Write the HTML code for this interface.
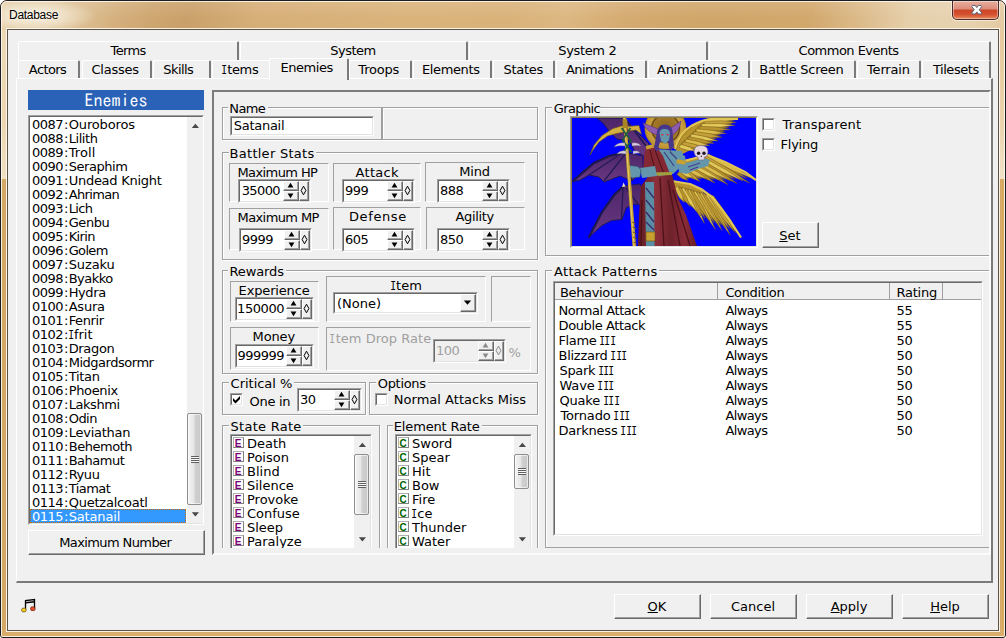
<!DOCTYPE html><html><head><meta charset="utf-8"><title>Database</title><style>
html,body{margin:0;padding:0;background:#fff;}
body{width:1006px;height:638px;position:relative;overflow:hidden;font-family:"DejaVu Sans","Liberation Sans",sans-serif;font-size:13px;color:#000;}
body div, body svg{position:absolute;}
.t{white-space:nowrap;line-height:16px;height:16px;font-size:13px;}
u{text-decoration:underline;text-underline-offset:1px;}
#win{left:0;top:0;width:1006px;height:638px;box-sizing:border-box;border:1px solid #1c1c24;border-radius:7px 7px 3px 3px;overflow:hidden;background:#d5a865;}
#tbar{left:-10px;top:0;width:1024px;height:30px;background:radial-gradient(ellipse 62px 17px at 44px 15px,rgba(255,250,238,.75),rgba(255,250,238,.45) 55%,rgba(255,250,238,0) 100%),linear-gradient(180deg,rgba(255,255,255,.12),rgba(255,255,255,0) 60%),linear-gradient(100deg,#e2cba4 10px,#e0c8a0 60px,#dbbd90 95px,#d5b07e 125px,#cea670 160px,#c9a069 195px,#cfa770 230px,#d6ae78 265px,#dab37b 410px,#d9b279 510px,#dcb781 570px,#d4aa70 630px,#d0a569 710px,#d2a86d 810px,#dcbb8a 860px,#e6d0ac 910px,#e7d2b0 960px,#e3c89e 1014px);}
#fl1{left:0;top:29px;width:7px;height:149px;background:linear-gradient(180deg,#ecd9b6,#ebd6b0 60%,#efe0c4);}
#fr1{right:0;top:29px;width:7px;height:149px;background:linear-gradient(180deg,#e6c99e,#ead3ac 60%,#f0e2c8);}
#fl2{left:0;top:178px;width:7px;height:460px;background:#d5a865;}
#fr2{right:0;top:178px;width:7px;height:460px;background:#d8aa64;}
#fb{left:0;bottom:0;width:1004px;height:7px;background:#d9ad6b;}
#hl{left:0;top:0;right:0;bottom:0;border:1px solid rgba(255,250,235,.85);border-radius:6px 6px 2px 2px;}
#title{left:9px;top:7px;font-family:"Liberation Sans",sans-serif;font-size:12px;line-height:16px;letter-spacing:-0.28px;color:#000;white-space:nowrap;text-shadow:0 0 4px rgba(255,255,255,.8),0 0 8px rgba(255,255,255,.6);}
#closewrap{left:950px;top:1px;width:51px;height:22px;overflow:hidden;}
#close{left:2px;top:0px;width:47px;height:19px;box-sizing:border-box;border:1px solid #4a2a28;border-top:none;border-radius:0 0 5px 5px;
 background:linear-gradient(180deg,#e8b0a0 0%,#dc8a78 45%,#cc4526 50%,#d45230 75%,#e68a5c 100%);box-shadow:inset 0 0 0 1px rgba(255,255,255,.4), 0 0 0 1px rgba(255,255,255,.55);}
#client{left:7px;top:29px;width:992px;height:602px;box-sizing:border-box;border:1px solid #5c5348;background:#f0f0f0;box-shadow:0 0 0 1px rgba(255,250,238,.9);}
.tab{box-sizing:border-box;border-top:1px solid #fff;border-left:1px solid #fff;border-right:2px solid #7a7a7a;background:#f0f0f0;border-radius:2px 2px 0 0;}
#panel{left:16px;top:78px;width:977px;height:505px;box-sizing:border-box;border-top:1px solid #fff;border-left:1px solid #fff;border-right:2px solid #7a7a7a;border-bottom:2px solid #7a7a7a;background:#f0f0f0;}
#lhead{left:28px;top:90px;width:176px;height:20px;background:#2a62b8;color:#fff;font-family:"IPAGothic","Liberation Mono",monospace;font-size:18px;line-height:20px;text-align:center;}
.field{box-sizing:border-box;border:1px solid;border-color:#a0a0a0 #fff #fff #a0a0a0;}
.fin{left:0;top:0;right:0;bottom:0;box-sizing:border-box;border:1px solid;border-color:#696969 #e3e3e3 #e3e3e3 #696969;overflow:hidden;}
.btn{box-sizing:border-box;border:1px solid;border-color:#fff #696969 #696969 #fff;box-shadow:inset -1px -1px 0 #a0a0a0;background:#f0f0f0;}
.I{font-family:"DejaVu Sans Mono","Liberation Mono",monospace;display:inline-block;width:5.3px;transform:scaleX(.74);transform-origin:0 50%;text-indent:-.9px;}
.d{letter-spacing:-0.5px;margin-right:0;}
.n{letter-spacing:-0.22px;}
.selrow{background:#3399ff;box-sizing:border-box;border:1px dotted #cc6600;}
.sbtrack{background:#f0f0f0;}
.sbthumb{box-sizing:border-box;border:1px solid #8e8e8e;border-radius:2px;background:linear-gradient(90deg,#f4f4f4 0%,#e6e6e6 45%,#d0d0d0 55%,#c8c8c8 100%);box-shadow:inset 0 0 0 1px rgba(255,255,255,.6);}
.grip{width:8px;height:7px;background:repeating-linear-gradient(180deg,#606060 0,#606060 1px,#f8f8f8 1px,#f8f8f8 2px);}
#rp{left:212px;top:90px;width:779px;height:465px;box-sizing:border-box;border:2px solid;border-color:#7c7c7c #fbfbfb #fbfbfb #7c7c7c;}
.rk{width:10px;height:10px;border:1px solid #b0b0b0;border-right-color:#808080;border-bottom-color:#808080;font-size:10px;line-height:11px;text-indent:-1px;font-weight:bold;text-align:center;background:#fff;font-family:"Liberation Sans",sans-serif;box-sizing:border-box;width:11px;height:11px;}
.hdr{box-sizing:border-box;border-right:1px solid #a0a0a0;border-bottom:1px solid #a0a0a0;background:#f0f0f0;box-shadow:1px 0 0 #fff;}
</style></head><body>
<div id="win"><div id="tbar"></div><div id="fl1"></div><div id="fl2"></div><div id="fr1"></div><div id="fr2"></div><div id="fb"></div><div id="hl"></div></div>
<div id="title">Database</div>
<div id="closewrap"><div id="close"><svg width="47" height="19" style="left:0;top:0"><path d="M19.5 4.5 L22.3 4.5 L23.8 6.6 L25.3 4.5 L28 4.5 L28.8 5.5 L26.3 8.7 L28.8 12 L28 13 L25.3 13 L23.8 10.9 L22.3 13 L19.5 13 L18.7 12 L21.2 8.7 L18.7 5.5 Z" fill="#fff" stroke="#56607a" stroke-width="1"/></svg></div></div>
<div id="client"></div>
<div class="tab" style="left:18px;top:41px;width:221px;height:20px"></div>
<div class="t" style="left:110.50px;top:43px;letter-spacing:-0.600px;">Terms</div>
<div class="tab" style="left:240px;top:41px;width:228px;height:20px"></div>
<div class="t" style="left:330.30px;top:43px;letter-spacing:-0.543px;">System</div>
<div class="tab" style="left:469px;top:41px;width:239px;height:20px"></div>
<div class="t" style="left:558.30px;top:43px;letter-spacing:-0.358px;">System 2</div>
<div class="tab" style="left:709px;top:41px;width:282px;height:20px"></div>
<div class="t" style="left:798.60px;top:43px;letter-spacing:-0.519px;">Common Events</div>
<div class="tab" style="left:18px;top:60px;width:62px;height:20px"></div>
<div class="t" style="left:28.80px;top:62px;letter-spacing:-0.582px;">Actors</div>
<div class="tab" style="left:82px;top:60px;width:70px;height:20px"></div>
<div class="t" style="left:91.40px;top:62px;letter-spacing:-0.217px;">Classes</div>
<div class="tab" style="left:153px;top:60px;width:58px;height:20px"></div>
<div class="t" style="left:163.30px;top:62px;letter-spacing:-0.600px;">Skills</div>
<div class="tab" style="left:212px;top:60px;width:59px;height:20px"></div>
<div class="t" style="left:221.90px;top:62px;letter-spacing:-0.340px;"><span class="I">I</span>tems</div>
<div class="tab" style="left:349px;top:60px;width:63px;height:20px"></div>
<div class="t" style="left:358.30px;top:62px;letter-spacing:-0.190px;">Troops</div>
<div class="tab" style="left:413px;top:60px;width:79px;height:20px"></div>
<div class="t" style="left:422.00px;top:62px;letter-spacing:-0.375px;">Elements</div>
<div class="tab" style="left:493px;top:60px;width:62px;height:20px"></div>
<div class="t" style="left:503.50px;top:62px;letter-spacing:-0.282px;">States</div>
<div class="tab" style="left:556px;top:60px;width:91px;height:20px"></div>
<div class="t" style="left:566.00px;top:62px;letter-spacing:-0.564px;">Animations</div>
<div class="tab" style="left:648px;top:60px;width:102px;height:20px"></div>
<div class="t" style="left:657.10px;top:62px;letter-spacing:-0.316px;">Animations 2</div>
<div class="tab" style="left:751px;top:60px;width:105px;height:20px"></div>
<div class="t" style="left:759.30px;top:62px;letter-spacing:-0.256px;">Battle Screen</div>
<div class="tab" style="left:857px;top:60px;width:64px;height:20px"></div>
<div class="t" style="left:867.00px;top:62px;letter-spacing:-0.162px;">Terrain</div>
<div class="tab" style="left:922px;top:60px;width:69px;height:20px"></div>
<div class="t" style="left:932.90px;top:62px;letter-spacing:-0.433px;">Tilesets</div>
<div id="panel"></div>
<div class="tab" style="left:269px;top:58px;width:80px;height:22px;background:#f0f0f0"></div>
<div class="t" style="left:280.40px;top:60px;letter-spacing:-0.437px;">Enemies</div>
<div id="lhead">Enemies</div>
<div class="field" style="left:28px;top:115px;width:176px;height:410px;"><div class="fin" style="background:#fff"></div></div>
<div class="t" style="left:32px;top:117px;"><span class="d">0087</span><span style="margin-left:.8px">:</span></div>
<div class="t" style="left:68.7px;top:117px;letter-spacing:-0.138px">Ouroboros</div>
<div class="t" style="left:32px;top:131px;"><span class="d">0088</span><span style="margin-left:.8px">:</span></div>
<div class="t" style="left:68.7px;top:131px;letter-spacing:-0.435px">Lilith</div>
<div class="t" style="left:32px;top:145px;"><span class="d">0089</span><span style="margin-left:.8px">:</span></div>
<div class="t" style="left:68.7px;top:145px;letter-spacing:0.086px">Troll</div>
<div class="t" style="left:32px;top:159px;"><span class="d">0090</span><span style="margin-left:.8px">:</span></div>
<div class="t" style="left:68.7px;top:159px;letter-spacing:-0.438px">Seraphim</div>
<div class="t" style="left:32px;top:173px;"><span class="d">0091</span><span style="margin-left:.8px">:</span></div>
<div class="t" style="left:68.7px;top:173px;letter-spacing:-0.269px">Undead Knight</div>
<div class="t" style="left:32px;top:187px;"><span class="d">0092</span><span style="margin-left:.8px">:</span></div>
<div class="t" style="left:68.7px;top:187px;letter-spacing:-0.653px">Ahriman</div>
<div class="t" style="left:32px;top:201px;"><span class="d">0093</span><span style="margin-left:.8px">:</span></div>
<div class="t" style="left:68.7px;top:201px;letter-spacing:-0.667px">Lich</div>
<div class="t" style="left:32px;top:215px;"><span class="d">0094</span><span style="margin-left:.8px">:</span></div>
<div class="t" style="left:68.7px;top:215px;letter-spacing:-0.441px">Genbu</div>
<div class="t" style="left:32px;top:229px;"><span class="d">0095</span><span style="margin-left:.8px">:</span></div>
<div class="t" style="left:68.7px;top:229px;letter-spacing:-0.648px">Kirin</div>
<div class="t" style="left:32px;top:243px;"><span class="d">0096</span><span style="margin-left:.8px">:</span></div>
<div class="t" style="left:68.7px;top:243px;letter-spacing:-0.659px">Golem</div>
<div class="t" style="left:32px;top:257px;"><span class="d">0097</span><span style="margin-left:.8px">:</span></div>
<div class="t" style="left:68.7px;top:257px;letter-spacing:-0.122px">Suzaku</div>
<div class="t" style="left:32px;top:271px;"><span class="d">0098</span><span style="margin-left:.8px">:</span></div>
<div class="t" style="left:68.7px;top:271px;letter-spacing:-0.534px">Byakko</div>
<div class="t" style="left:32px;top:285px;"><span class="d">0099</span><span style="margin-left:.8px">:</span></div>
<div class="t" style="left:68.7px;top:285px;letter-spacing:-0.391px">Hydra</div>
<div class="t" style="left:32px;top:299px;"><span class="d">0100</span><span style="margin-left:.8px">:</span></div>
<div class="t" style="left:68.7px;top:299px;letter-spacing:-0.238px">Asura</div>
<div class="t" style="left:32px;top:313px;"><span class="d">0101</span><span style="margin-left:.8px">:</span></div>
<div class="t" style="left:68.7px;top:313px;letter-spacing:-0.392px">Fenrir</div>
<div class="t" style="left:32px;top:327px;"><span class="d">0102</span><span style="margin-left:.8px">:</span></div>
<div class="t" style="left:68.7px;top:327px;letter-spacing:-0.042px"><span class="I">I</span>frit</div>
<div class="t" style="left:32px;top:341px;"><span class="d">0103</span><span style="margin-left:.8px">:</span></div>
<div class="t" style="left:68.7px;top:341px;letter-spacing:-0.345px">Dragon</div>
<div class="t" style="left:32px;top:355px;"><span class="d">0104</span><span style="margin-left:.8px">:</span></div>
<div class="t" style="left:68.7px;top:355px;letter-spacing:-0.479px">Midgardsormr</div>
<div class="t" style="left:32px;top:369px;"><span class="d">0105</span><span style="margin-left:.8px">:</span></div>
<div class="t" style="left:68.7px;top:369px;letter-spacing:-0.304px">Titan</div>
<div class="t" style="left:32px;top:383px;"><span class="d">0106</span><span style="margin-left:.8px">:</span></div>
<div class="t" style="left:68.7px;top:383px;letter-spacing:-0.347px">Phoenix</div>
<div class="t" style="left:32px;top:397px;"><span class="d">0107</span><span style="margin-left:.8px">:</span></div>
<div class="t" style="left:68.7px;top:397px;letter-spacing:-0.436px">Lakshmi</div>
<div class="t" style="left:32px;top:411px;"><span class="d">0108</span><span style="margin-left:.8px">:</span></div>
<div class="t" style="left:68.7px;top:411px;letter-spacing:-0.532px">Odin</div>
<div class="t" style="left:32px;top:425px;"><span class="d">0109</span><span style="margin-left:.8px">:</span></div>
<div class="t" style="left:68.7px;top:425px;letter-spacing:-0.248px">Leviathan</div>
<div class="t" style="left:32px;top:439px;"><span class="d">0110</span><span style="margin-left:.8px">:</span></div>
<div class="t" style="left:68.7px;top:439px;letter-spacing:-0.467px">Behemoth</div>
<div class="t" style="left:32px;top:453px;"><span class="d">0111</span><span style="margin-left:.8px">:</span></div>
<div class="t" style="left:68.7px;top:453px;letter-spacing:-0.482px">Bahamut</div>
<div class="t" style="left:32px;top:467px;"><span class="d">0112</span><span style="margin-left:.8px">:</span></div>
<div class="t" style="left:68.7px;top:467px;letter-spacing:-0.418px">Ryuu</div>
<div class="t" style="left:32px;top:481px;"><span class="d">0113</span><span style="margin-left:.8px">:</span></div>
<div class="t" style="left:68.7px;top:481px;letter-spacing:-0.550px">Tiamat</div>
<div class="t" style="left:32px;top:495px;"><span class="d">0114</span><span style="margin-left:.8px">:</span></div>
<div class="t" style="left:68.7px;top:495px;letter-spacing:-0.230px">Quetzalcoatl</div>
<div class="selrow" style="left:30px;top:509px;width:156px;height:14px"></div>
<div class="t" style="left:32px;top:509px;color:#fff;"><span class="d">0115</span><span style="margin-left:.8px">:</span></div>
<div class="t" style="left:68.7px;top:509px;color:#fff;letter-spacing:-0.157px">Satanail</div>
<div class="sbtrack" style="left:187px;top:117px;width:16px;height:406px"></div>
<svg style="left:187px;top:117px" width="17" height="406"><path d="M4.8 11 L8.4 6.8 L12 11 Z" fill="#484848"/><path d="M4.8 395.2 L8.4 399.4 L12 395.2 Z" fill="#484848"/></svg>
<div class="sbthumb" style="left:187px;top:413px;width:15px;height:92px"><div class="grip" style="left:3px;top:42px"></div></div>
<div class="btn" style="left:28px;top:530px;width:177px;height:25px;"></div>
<div class="t" style="left:59.20px;top:535px;letter-spacing:-0.600px;">Maximum Number</div>
<div id="rp"></div>
<div id="rpc" style="left:214px;top:92px;width:775px;height:456px;overflow:hidden">
<div style="left:-214px;top:-92px;width:1006px;height:638px">
<div style="left:223px;top:108px;width:160px;height:33px;box-sizing:border-box;border-top:1px solid #ffffff;border-left:1px solid #ffffff;border-bottom:1px solid #ffffff;border-right:1px solid #ffffff;"></div>
<div style="left:222px;top:107px;width:160px;height:33px;box-sizing:border-box;border-top:1px solid #a0a0a0;border-left:1px solid #a0a0a0;border-bottom:1px solid #a0a0a0;border-right:1px solid #a0a0a0;"></div>
<div style="left:228.3px;top:107px;width:39.30000000000001px;height:2px;background:#f0f0f0"></div>
<div class="t" style="left:229.30px;top:101px;letter-spacing:-0.600px;">Name</div>
<div class="field" style="left:230px;top:116px;width:144px;height:20px;"><div class="fin" style="background:#fff"></div></div>
<div class="t" style="left:233.80px;top:118px;letter-spacing:-0.286px;">Satanail</div>
<div style="left:383px;top:108px;width:156px;height:33px;box-sizing:border-box;border-top:1px solid #ffffff;border-left:1px solid #ffffff;border-bottom:1px solid #ffffff;border-right:1px solid #ffffff;"></div>
<div style="left:382px;top:107px;width:156px;height:33px;box-sizing:border-box;border-top:1px solid #a0a0a0;border-left:1px solid #a0a0a0;border-bottom:1px solid #a0a0a0;border-right:1px solid #a0a0a0;"></div>
<div style="left:223px;top:153px;width:316px;height:108px;box-sizing:border-box;border-top:1px solid #ffffff;border-left:1px solid #ffffff;border-bottom:1px solid #ffffff;border-right:1px solid #ffffff;"></div>
<div style="left:222px;top:152px;width:316px;height:108px;box-sizing:border-box;border-top:1px solid #a0a0a0;border-left:1px solid #a0a0a0;border-bottom:1px solid #a0a0a0;border-right:1px solid #a0a0a0;"></div>
<div style="left:228.6px;top:152px;width:87.79999999999998px;height:2px;background:#f0f0f0"></div>
<div class="t" style="left:229.60px;top:146px;letter-spacing:0.268px;">Battler Stats</div>
<div style="left:229px;top:163px;width:100px;height:39px;box-sizing:border-box;border:1px solid;border-color:#a0a0a0 #ffffff #ffffff #a0a0a0"></div>
<div class="t" style="left:237.50px;top:165px;letter-spacing:-0.600px;">Maximum HP</div>
<div class="field" style="left:238px;top:179px;width:73px;height:24px;"><div class="fin" style="background:#fff"></div></div>
<div class="t" style="left:241.70px;top:183px;letter-spacing:-0.600px;color:#000">35000</div>
<div class="btn" style="left:283px;top:181px;width:16px;height:10px;"></div>
<div class="btn" style="left:283px;top:191px;width:16px;height:10px;"></div>
<svg style="left:283px;top:181px" width="16" height="20"><path d="M7.5 1.8 L10.4 6.6 L4.6 6.6 Z M4.6 12.4 L10.4 12.4 L7.5 17.2 Z" fill="#000"/></svg>
<div class="btn" style="left:299px;top:181px;width:10px;height:20px;"></div>
<svg style="left:299px;top:181px" width="10" height="20"><path d="M4.5 5.2 L6.9 9.5 L4.5 13.8 L2.1 9.5 Z" fill="none" stroke="#000" stroke-width="1"/></svg>
<div style="left:229px;top:208px;width:100px;height:42px;box-sizing:border-box;border:1px solid;border-color:#a0a0a0 #ffffff #ffffff #a0a0a0"></div>
<div class="t" style="left:237.50px;top:210px;letter-spacing:-0.589px;">Maximum MP</div>
<div class="field" style="left:239px;top:228px;width:73px;height:24px;"><div class="fin" style="background:#fff"></div></div>
<div class="t" style="left:242px;top:232px;color:#000;letter-spacing:-0.5px">9999</div>
<div class="btn" style="left:284px;top:230px;width:16px;height:10px;"></div>
<div class="btn" style="left:284px;top:240px;width:16px;height:10px;"></div>
<svg style="left:284px;top:230px" width="16" height="20"><path d="M7.5 1.8 L10.4 6.6 L4.6 6.6 Z M4.6 12.4 L10.4 12.4 L7.5 17.2 Z" fill="#000"/></svg>
<div class="btn" style="left:300px;top:230px;width:10px;height:20px;"></div>
<svg style="left:300px;top:230px" width="10" height="20"><path d="M4.5 5.2 L6.9 9.5 L4.5 13.8 L2.1 9.5 Z" fill="none" stroke="#000" stroke-width="1"/></svg>
<div style="left:333px;top:163px;width:88px;height:39px;box-sizing:border-box;border:1px solid;border-color:#a0a0a0 #ffffff #ffffff #a0a0a0"></div>
<div class="t" style="left:355.60px;top:165px;letter-spacing:0.285px;">Attack</div>
<div class="field" style="left:342px;top:179px;width:73px;height:24px;"><div class="fin" style="background:#fff"></div></div>
<div class="t" style="left:345px;top:183px;color:#000;letter-spacing:-0.5px">999</div>
<div class="btn" style="left:387px;top:181px;width:16px;height:10px;"></div>
<div class="btn" style="left:387px;top:191px;width:16px;height:10px;"></div>
<svg style="left:387px;top:181px" width="16" height="20"><path d="M7.5 1.8 L10.4 6.6 L4.6 6.6 Z M4.6 12.4 L10.4 12.4 L7.5 17.2 Z" fill="#000"/></svg>
<div class="btn" style="left:403px;top:181px;width:10px;height:20px;"></div>
<svg style="left:403px;top:181px" width="10" height="20"><path d="M4.5 5.2 L6.9 9.5 L4.5 13.8 L2.1 9.5 Z" fill="none" stroke="#000" stroke-width="1"/></svg>
<div style="left:333px;top:207px;width:88px;height:43px;box-sizing:border-box;border:1px solid;border-color:#a0a0a0 #ffffff #ffffff #a0a0a0"></div>
<div class="t" style="left:349.00px;top:209px;letter-spacing:0.600px;">Defense</div>
<div class="field" style="left:342px;top:228px;width:73px;height:24px;"><div class="fin" style="background:#fff"></div></div>
<div class="t" style="left:345px;top:232px;color:#000;letter-spacing:-0.5px">605</div>
<div class="btn" style="left:387px;top:230px;width:16px;height:10px;"></div>
<div class="btn" style="left:387px;top:240px;width:16px;height:10px;"></div>
<svg style="left:387px;top:230px" width="16" height="20"><path d="M7.5 1.8 L10.4 6.6 L4.6 6.6 Z M4.6 12.4 L10.4 12.4 L7.5 17.2 Z" fill="#000"/></svg>
<div class="btn" style="left:403px;top:230px;width:10px;height:20px;"></div>
<svg style="left:403px;top:230px" width="10" height="20"><path d="M4.5 5.2 L6.9 9.5 L4.5 13.8 L2.1 9.5 Z" fill="none" stroke="#000" stroke-width="1"/></svg>
<div style="left:425px;top:162px;width:100px;height:40px;box-sizing:border-box;border:1px solid;border-color:#a0a0a0 #ffffff #ffffff #a0a0a0"></div>
<div class="t" style="left:459.20px;top:164px;letter-spacing:-0.189px;">Mind</div>
<div class="field" style="left:437px;top:179px;width:73px;height:24px;"><div class="fin" style="background:#fff"></div></div>
<div class="t" style="left:440px;top:183px;color:#000;letter-spacing:-0.5px">888</div>
<div class="btn" style="left:482px;top:181px;width:16px;height:10px;"></div>
<div class="btn" style="left:482px;top:191px;width:16px;height:10px;"></div>
<svg style="left:482px;top:181px" width="16" height="20"><path d="M7.5 1.8 L10.4 6.6 L4.6 6.6 Z M4.6 12.4 L10.4 12.4 L7.5 17.2 Z" fill="#000"/></svg>
<div class="btn" style="left:498px;top:181px;width:10px;height:20px;"></div>
<svg style="left:498px;top:181px" width="10" height="20"><path d="M4.5 5.2 L6.9 9.5 L4.5 13.8 L2.1 9.5 Z" fill="none" stroke="#000" stroke-width="1"/></svg>
<div style="left:426px;top:207px;width:99px;height:43px;box-sizing:border-box;border:1px solid;border-color:#a0a0a0 #ffffff #ffffff #a0a0a0"></div>
<div class="t" style="left:455.50px;top:209px;letter-spacing:-0.346px;">Agility</div>
<div class="field" style="left:437px;top:228px;width:73px;height:24px;"><div class="fin" style="background:#fff"></div></div>
<div class="t" style="left:440px;top:232px;color:#000;letter-spacing:-0.5px">850</div>
<div class="btn" style="left:482px;top:230px;width:16px;height:10px;"></div>
<div class="btn" style="left:482px;top:240px;width:16px;height:10px;"></div>
<svg style="left:482px;top:230px" width="16" height="20"><path d="M7.5 1.8 L10.4 6.6 L4.6 6.6 Z M4.6 12.4 L10.4 12.4 L7.5 17.2 Z" fill="#000"/></svg>
<div class="btn" style="left:498px;top:230px;width:10px;height:20px;"></div>
<svg style="left:498px;top:230px" width="10" height="20"><path d="M4.5 5.2 L6.9 9.5 L4.5 13.8 L2.1 9.5 Z" fill="none" stroke="#000" stroke-width="1"/></svg>
<div style="left:223px;top:271px;width:316px;height:104px;box-sizing:border-box;border-top:1px solid #ffffff;border-left:1px solid #ffffff;border-bottom:1px solid #ffffff;border-right:1px solid #ffffff;"></div>
<div style="left:222px;top:270px;width:316px;height:104px;box-sizing:border-box;border-top:1px solid #a0a0a0;border-left:1px solid #a0a0a0;border-bottom:1px solid #a0a0a0;border-right:1px solid #a0a0a0;"></div>
<div style="left:228.4px;top:270px;width:57.900000000000006px;height:2px;background:#f0f0f0"></div>
<div class="t" style="left:229.40px;top:264px;letter-spacing:-0.086px;">Rewards</div>
<div style="left:230px;top:281px;width:89px;height:41px;box-sizing:border-box;border:1px solid;border-color:#a0a0a0 #ffffff #ffffff #a0a0a0"></div>
<div class="t" style="left:238.60px;top:283px;letter-spacing:-0.155px;">Experience</div>
<div class="field" style="left:235px;top:297px;width:79px;height:24px;"><div class="fin" style="background:#fff"></div></div>
<div class="t" style="left:237.10px;top:301px;letter-spacing:-0.431px;color:#000">150000</div>
<div class="btn" style="left:286px;top:299px;width:16px;height:10px;"></div>
<div class="btn" style="left:286px;top:309px;width:16px;height:10px;"></div>
<svg style="left:286px;top:299px" width="16" height="20"><path d="M7.5 1.8 L10.4 6.6 L4.6 6.6 Z M4.6 12.4 L10.4 12.4 L7.5 17.2 Z" fill="#000"/></svg>
<div class="btn" style="left:302px;top:299px;width:10px;height:20px;"></div>
<svg style="left:302px;top:299px" width="10" height="20"><path d="M4.5 5.2 L6.9 9.5 L4.5 13.8 L2.1 9.5 Z" fill="none" stroke="#000" stroke-width="1"/></svg>
<div style="left:230px;top:327px;width:89px;height:43px;box-sizing:border-box;border:1px solid;border-color:#a0a0a0 #ffffff #ffffff #a0a0a0"></div>
<div class="t" style="left:252.60px;top:329px;letter-spacing:-0.152px;">Money</div>
<div class="field" style="left:235px;top:344px;width:79px;height:24px;"><div class="fin" style="background:#fff"></div></div>
<div class="t" style="left:237.50px;top:348px;letter-spacing:-0.511px;color:#000">999999</div>
<div class="btn" style="left:286px;top:346px;width:16px;height:10px;"></div>
<div class="btn" style="left:286px;top:356px;width:16px;height:10px;"></div>
<svg style="left:286px;top:346px" width="16" height="20"><path d="M7.5 1.8 L10.4 6.6 L4.6 6.6 Z M4.6 12.4 L10.4 12.4 L7.5 17.2 Z" fill="#000"/></svg>
<div class="btn" style="left:302px;top:346px;width:10px;height:20px;"></div>
<svg style="left:302px;top:346px" width="10" height="20"><path d="M4.5 5.2 L6.9 9.5 L4.5 13.8 L2.1 9.5 Z" fill="none" stroke="#000" stroke-width="1"/></svg>
<div style="left:326px;top:276px;width:160px;height:46px;box-sizing:border-box;border:1px solid;border-color:#a0a0a0 #ffffff #ffffff #a0a0a0"></div>
<div class="t" style="left:390.70px;top:278px;letter-spacing:0.102px;"><span class="I">I</span>tem</div>
<div class="field" style="left:333px;top:292px;width:145px;height:22px;"><div class="fin" style="background:#fff"></div></div>
<div class="t" style="left:337px;top:296px;">(None)</div>
<div class="btn" style="left:460px;top:294px;width:16px;height:18px;"></div>
<svg width="16" height="18" style="left:460px;top:294px"><path d="M3.8 6.5 L11.2 6.5 L7.5 10.7 Z" fill="#000"/></svg>
<div style="left:491px;top:276px;width:40px;height:46px;box-sizing:border-box;border:1px solid;border-color:#a0a0a0 #ffffff #ffffff #a0a0a0"></div>
<div style="left:326px;top:327px;width:205px;height:44px;box-sizing:border-box;border:1px solid;border-color:#a0a0a0 #ffffff #ffffff #a0a0a0"></div>
<div class="t" style="left:330.40px;top:331px;letter-spacing:0.030px;color:#a0a0a0"><span class="I">I</span>tem Drop Rate</div>
<div class="field" style="left:433px;top:339px;width:73px;height:24px;"><div class="fin" style="background:#f0f0f0"></div></div>
<div class="t" style="left:436px;top:343px;color:#a0a0a0;letter-spacing:-0.5px">100</div>
<div class="btn" style="left:478px;top:341px;width:16px;height:10px;"></div>
<div class="btn" style="left:478px;top:351px;width:16px;height:10px;"></div>
<svg style="left:478px;top:341px" width="16" height="20"><path d="M7.5 1.8 L10.4 6.6 L4.6 6.6 Z M4.6 12.4 L10.4 12.4 L7.5 17.2 Z" fill="#8a8a8a"/></svg>
<div class="btn" style="left:494px;top:341px;width:10px;height:20px;"></div>
<svg style="left:494px;top:341px" width="10" height="20"><path d="M4.5 5.2 L6.9 9.5 L4.5 13.8 L2.1 9.5 Z" fill="none" stroke="#8a8a8a" stroke-width="1"/></svg>
<div class="t" style="left:508.60px;top:345px;letter-spacing:0.000px;color:#a0a0a0">%</div>
<div style="left:223px;top:383px;width:144px;height:33px;box-sizing:border-box;border-top:1px solid #ffffff;border-left:1px solid #ffffff;border-bottom:1px solid #ffffff;border-right:1px solid #ffffff;"></div>
<div style="left:222px;top:382px;width:144px;height:33px;box-sizing:border-box;border-top:1px solid #a0a0a0;border-left:1px solid #a0a0a0;border-bottom:1px solid #a0a0a0;border-right:1px solid #a0a0a0;"></div>
<div style="left:228.6px;top:382px;width:65.4px;height:2px;background:#f0f0f0"></div>
<div class="t" style="left:230.60px;top:376px;letter-spacing:-0.022px;">Critical %</div>
<div class="field" style="left:230px;top:393px;width:13px;height:13px;"><div class="fin" style="background:#fff"></div></div>
<svg style="left:230px;top:393px" width="13" height="13"><path d="M3 5 L5.5 7.5 L10 3 L10 6 L5.5 10.5 L3 8 Z" fill="#000"/></svg>
<div class="t" style="left:249.60px;top:394px;letter-spacing:-0.303px;">One in</div>
<div class="field" style="left:297px;top:388px;width:65px;height:24px;"><div class="fin" style="background:#fff"></div></div>
<div class="t" style="left:300px;top:392px;color:#000;letter-spacing:-0.5px">30</div>
<div class="btn" style="left:334px;top:390px;width:16px;height:10px;"></div>
<div class="btn" style="left:334px;top:400px;width:16px;height:10px;"></div>
<svg style="left:334px;top:390px" width="16" height="20"><path d="M7.5 1.8 L10.4 6.6 L4.6 6.6 Z M4.6 12.4 L10.4 12.4 L7.5 17.2 Z" fill="#000"/></svg>
<div class="btn" style="left:350px;top:390px;width:10px;height:20px;"></div>
<svg style="left:350px;top:390px" width="10" height="20"><path d="M4.5 5.2 L6.9 9.5 L4.5 13.8 L2.1 9.5 Z" fill="none" stroke="#000" stroke-width="1"/></svg>
<div style="left:370px;top:383px;width:169px;height:33px;box-sizing:border-box;border-top:1px solid #ffffff;border-left:1px solid #ffffff;border-bottom:1px solid #ffffff;border-right:1px solid #ffffff;"></div>
<div style="left:369px;top:382px;width:169px;height:33px;box-sizing:border-box;border-top:1px solid #a0a0a0;border-left:1px solid #a0a0a0;border-bottom:1px solid #a0a0a0;border-right:1px solid #a0a0a0;"></div>
<div style="left:375.8px;top:382px;width:52.39999999999998px;height:2px;background:#f0f0f0"></div>
<div class="t" style="left:377.80px;top:376px;letter-spacing:-0.331px;">Options</div>
<div class="field" style="left:375px;top:393px;width:13px;height:13px;"><div class="fin" style="background:#fff"></div></div>
<div class="t" style="left:393.80px;top:392px;letter-spacing:0.018px;">Normal Attacks Miss</div>
<div style="left:223px;top:426px;width:158px;height:140px;box-sizing:border-box;border-top:1px solid #ffffff;border-left:1px solid #ffffff;border-bottom:1px solid #ffffff;border-right:1px solid #ffffff;"></div>
<div style="left:222px;top:425px;width:158px;height:140px;box-sizing:border-box;border-top:1px solid #a0a0a0;border-left:1px solid #a0a0a0;border-bottom:1px solid #a0a0a0;border-right:1px solid #a0a0a0;"></div>
<div style="left:228.6px;top:425px;width:74.70000000000002px;height:2px;background:#f0f0f0"></div>
<div class="t" style="left:230.60px;top:419px;letter-spacing:0.261px;">State Rate</div>
<div style="left:388px;top:426px;width:151px;height:140px;box-sizing:border-box;border-top:1px solid #ffffff;border-left:1px solid #ffffff;border-bottom:1px solid #ffffff;border-right:1px solid #ffffff;"></div>
<div style="left:387px;top:425px;width:151px;height:140px;box-sizing:border-box;border-top:1px solid #a0a0a0;border-left:1px solid #a0a0a0;border-bottom:1px solid #a0a0a0;border-right:1px solid #a0a0a0;"></div>
<div style="left:392.8px;top:425px;width:89.0px;height:2px;background:#f0f0f0"></div>
<div class="t" style="left:393.80px;top:419px;letter-spacing:-0.160px;">Element Rate</div>
<div class="field" style="left:230px;top:434px;width:142px;height:116px;"><div class="fin" style="background:#fff"></div></div>
<div class="rk" style="left:233px;top:437px;color:#780078">E</div>
<div class="t" style="left:247px;top:436px;">Death</div>
<div class="rk" style="left:233px;top:451px;color:#780078">E</div>
<div class="t" style="left:247px;top:450px;">Poison</div>
<div class="rk" style="left:233px;top:465px;color:#780078">E</div>
<div class="t" style="left:247px;top:464px;">Blind</div>
<div class="rk" style="left:233px;top:479px;color:#780078">E</div>
<div class="t" style="left:247px;top:478px;">Silence</div>
<div class="rk" style="left:233px;top:493px;color:#780078">E</div>
<div class="t" style="left:247px;top:492px;">Provoke</div>
<div class="rk" style="left:233px;top:507px;color:#780078">E</div>
<div class="t" style="left:247px;top:506px;">Confuse</div>
<div class="rk" style="left:233px;top:521px;color:#780078">E</div>
<div class="t" style="left:247px;top:520px;">Sleep</div>
<div class="rk" style="left:233px;top:535px;color:#780078">E</div>
<div class="t" style="left:247px;top:534px;">Paralyze</div>
<div class="sbtrack" style="left:354px;top:436px;width:16px;height:112px"></div>
<svg style="left:354px;top:436px" width="17" height="112"><path d="M4.8 11 L8.4 6.8 L12 11 Z" fill="#484848"/><path d="M4.8 101.2 L8.4 105.4 L12 101.2 Z" fill="#484848"/></svg>
<div class="sbthumb" style="left:354px;top:454px;width:15px;height:61px"><div class="grip" style="left:3px;top:26px"></div></div>
<div class="field" style="left:395px;top:434px;width:137px;height:116px;"><div class="fin" style="background:#fff"></div></div>
<div class="rk" style="left:398px;top:437px;color:#006400">C</div>
<div class="t" style="left:412px;top:436px;">Sword</div>
<div class="rk" style="left:398px;top:451px;color:#006400">C</div>
<div class="t" style="left:412px;top:450px;">Spear</div>
<div class="rk" style="left:398px;top:465px;color:#006400">C</div>
<div class="t" style="left:412px;top:464px;">Hit</div>
<div class="rk" style="left:398px;top:479px;color:#006400">C</div>
<div class="t" style="left:412px;top:478px;">Bow</div>
<div class="rk" style="left:398px;top:493px;color:#006400">C</div>
<div class="t" style="left:412px;top:492px;">Fire</div>
<div class="rk" style="left:398px;top:507px;color:#006400">C</div>
<div class="t" style="left:412px;top:506px;"><span class="I">I</span>ce</div>
<div class="rk" style="left:398px;top:521px;color:#006400">C</div>
<div class="t" style="left:412px;top:520px;">Thunder</div>
<div class="rk" style="left:398px;top:535px;color:#006400">C</div>
<div class="t" style="left:412px;top:534px;">Water</div>
<div class="sbtrack" style="left:514px;top:436px;width:16px;height:112px"></div>
<svg style="left:514px;top:436px" width="17" height="112"><path d="M4.8 11 L8.4 6.8 L12 11 Z" fill="#484848"/><path d="M4.8 101.2 L8.4 105.4 L12 101.2 Z" fill="#484848"/></svg>
<div class="sbthumb" style="left:514px;top:454px;width:15px;height:35px"><div class="grip" style="left:3px;top:13px"></div></div>
<div style="left:546px;top:108px;width:460px;height:149px;box-sizing:border-box;border-top:1px solid #ffffff;border-left:1px solid #ffffff;border-bottom:1px solid #ffffff;border-right:1px solid #ffffff;"></div>
<div style="left:545px;top:107px;width:460px;height:149px;box-sizing:border-box;border-top:1px solid #a0a0a0;border-left:1px solid #a0a0a0;border-bottom:1px solid #a0a0a0;border-right:1px solid #a0a0a0;"></div>
<div style="left:551.7px;top:107px;width:48.299999999999955px;height:2px;background:#f0f0f0"></div>
<div class="t" style="left:553.70px;top:101px;letter-spacing:-0.600px;">Graphic</div>
<div class="field" style="left:570px;top:116px;width:188px;height:132px;border-color:#a0a0a0 #fff #fff #a0a0a0"><div class="fin" style="background:#0000ff;border-color:#8a7a50 #e3e3e3 #e3e3e3 #8a7a50"></div></div>
<svg style="left:572px;top:118px" width="184" height="128" viewBox="572 118 184 128">
<defs>
<linearGradient id="sprb" x1="0" y1="0" x2="1" y2="0"><stop offset="0" stop-color="#5e1a24"/><stop offset=".3" stop-color="#8e303a"/><stop offset=".55" stop-color="#6e222c"/><stop offset=".8" stop-color="#8a2c38"/><stop offset="1" stop-color="#641c26"/></linearGradient>
<radialGradient id="sphl" cx=".5" cy=".5" r=".5"><stop offset="0" stop-color="#8a6420"/><stop offset=".6" stop-color="#a47828"/><stop offset=".66" stop-color="#5e4210"/><stop offset=".73" stop-color="#caa040"/><stop offset=".93" stop-color="#c09434"/><stop offset="1" stop-color="#8a6a20"/></radialGradient>
<linearGradient id="sppw" x1="0" y1="0" x2="0" y2="1"><stop offset="0" stop-color="#4c2668"/><stop offset="1" stop-color="#6a3882"/></linearGradient>
</defs>
<rect x="572" y="118" width="184" height="128" fill="#0000ff"/>
<circle cx="665.5" cy="128.5" r="21" fill="url(#sphl)"/>
<path d="M597 118 L622 118.5 L629 124 L640 135 L649 144 L645 157 L634 150 L630 141 L617 139 L609 131 L604 124 Z" fill="url(#sppw)" stroke="#241a58" stroke-width="1"/>
<path d="M627 121 L646 146" stroke="#241a58" stroke-width="1.8" fill="none"/>
<path d="M572.5 181.5 L583 171 L594 163.5 L609 156.5 L626 152.5 L643 156 L643 169 L640 173 L632 181 L620 176 L604 182 L599 177 L589 175 L580 180 Z" fill="url(#sppw)" stroke="#241a58" stroke-width="1"/>
<path d="M572.5 181.5 L594 163 L609 156 L626 152" stroke="#1e1650" stroke-width="2.2" fill="none"/>
<path d="M626 153 L604 181 M628 154 L632 180 M622 153 L589 175" stroke="#241a58" stroke-width="1.3" fill="none"/>
<path d="M588.7 237.4 L602 212 L614.5 194.5 L623.8 186 L640 184 L644.5 193.5 L640 205 L634 204 L626 208 L622 219.5 L611.5 220.5 L602 225.5 Z" fill="url(#sppw)" stroke="#241a58" stroke-width="1"/>
<path d="M588.7 237.4 L602 212 L614.5 194.5 L623.8 186" stroke="#1e1650" stroke-width="2.2" fill="none"/>
<path d="M623 188 L621.5 219 M626 188 L638 204" stroke="#241a58" stroke-width="1.3" fill="none"/>
<path d="M622 187 L623.5 182.5 L625.5 186.5 Z" fill="#e8e0c0"/>
<path d="M675 148 L681 134 L691 125.5 L706 120 L702 136 L692 149 L679 156 Z" fill="#b8942e"/>
<path d="M705.6 119.5 L720.9 118.9 L733.5 120.7 L721.0 123.5 L705.7 124.1 Z" fill="#a8842a" stroke="#6e5214" stroke-width=".45"/><path d="M702.9 122.0 L718.8 121.7 L731.8 123.8 L718.9 126.3 L703.0 126.6 Z" fill="#b8942e" stroke="#6e5214" stroke-width=".45"/><path d="M700.3 124.6 L716.0 124.8 L728.9 127.3 L715.9 129.4 L700.2 129.2 Z" fill="#a8842a" stroke="#6e5214" stroke-width=".45"/><path d="M697.7 127.1 L712.6 128.2 L724.7 131.3 L712.3 132.7 L697.4 131.7 Z" fill="#b8942e" stroke="#6e5214" stroke-width=".45"/><path d="M695.1 129.7 L709.3 131.4 L720.6 135.0 L708.8 135.9 L694.6 134.3 Z" fill="#a8842a" stroke="#6e5214" stroke-width=".45"/><path d="M692.5 132.3 L706.0 134.5 L716.7 138.6 L705.3 139.0 L691.8 136.8 Z" fill="#b8942e" stroke="#6e5214" stroke-width=".45"/><path d="M689.9 134.8 L702.7 137.3 L712.8 141.5 L701.9 141.8 L689.0 139.3 Z" fill="#a8842a" stroke="#6e5214" stroke-width=".45"/><path d="M687.2 137.4 L699.3 139.8 L708.8 144.0 L698.5 144.3 L686.3 141.9 Z" fill="#b8942e" stroke="#6e5214" stroke-width=".45"/><path d="M684.5 139.9 L695.3 142.2 L703.7 146.3 L694.4 146.7 L683.6 144.4 Z" fill="#a8842a" stroke="#6e5214" stroke-width=".45"/><path d="M681.9 142.5 L690.7 144.8 L697.3 148.9 L689.5 149.3 L680.8 146.9 Z" fill="#b8942e" stroke="#6e5214" stroke-width=".45"/><path d="M706.9 118.6 L724.0 117.8 L738.0 119.0 L724.1 121.6 L707.1 122.4 Z" fill="#d9bc4c" stroke="#6e5214" stroke-width=".45"/><path d="M704.2 121.2 L722.0 120.7 L736.5 122.2 L722.1 124.5 L704.4 124.9 Z" fill="#c4a038" stroke="#6e5214" stroke-width=".45"/><path d="M701.6 123.7 L720.0 123.5 L735.0 125.3 L720.0 127.3 L701.6 127.5 Z" fill="#e2c858" stroke="#6e5214" stroke-width=".45"/><path d="M699.0 126.3 L716.4 127.0 L730.5 129.5 L716.2 130.8 L698.8 130.0 Z" fill="#b8932e" stroke="#6e5214" stroke-width=".45"/><path d="M696.4 128.8 L712.9 130.4 L726.3 133.6 L712.6 134.2 L696.0 132.6 Z" fill="#d9bc4c" stroke="#6e5214" stroke-width=".45"/><path d="M693.8 131.4 L709.4 133.6 L722.0 137.3 L708.9 137.4 L693.2 135.1 Z" fill="#c4a038" stroke="#6e5214" stroke-width=".45"/><path d="M691.2 133.9 L706.1 136.7 L718.0 140.9 L705.4 140.5 L690.4 137.7 Z" fill="#e2c858" stroke="#6e5214" stroke-width=".45"/><path d="M688.5 136.5 L702.7 139.3 L714.0 143.4 L702.0 143.0 L687.7 140.2 Z" fill="#b8932e" stroke="#6e5214" stroke-width=".45"/><path d="M685.8 139.0 L699.1 141.7 L709.7 145.7 L698.4 145.4 L685.0 142.8 Z" fill="#d9bc4c" stroke="#6e5214" stroke-width=".45"/><path d="M683.1 141.6 L694.3 144.1 L703.0 148.0 L693.4 147.8 L682.3 145.3 Z" fill="#c4a038" stroke="#6e5214" stroke-width=".45"/><path d="M680.6 144.2 L689.4 146.9 L696.0 151.0 L688.2 150.6 L679.4 147.8 Z" fill="#e2c858" stroke="#6e5214" stroke-width=".45"/>
<path d="M675 149 Q679 133 692 125.5 T716 119.2 L738 119" fill="none" stroke="#e0c454" stroke-width="2.2" stroke-linejoin="round"/>
<path d="M676 150 Q680 135 692 127" fill="none" stroke="#8a6a20" stroke-width=".6"/>
<path d="M684 160 L707 155 L722 161 L700 176 L680 176 Z" fill="#b8942e"/>
<path d="M707.7 154.7 L730.0 166.7 L747.2 178.5 L727.9 170.8 L705.5 158.8 Z" fill="#a8842a" stroke="#6e5214" stroke-width=".45"/><path d="M705.0 156.3 L725.5 167.8 L741.2 179.2 L723.3 171.8 L702.8 160.3 Z" fill="#b8942e" stroke="#6e5214" stroke-width=".45"/><path d="M702.3 157.9 L721.1 168.7 L735.3 179.6 L718.8 172.7 L700.0 161.9 Z" fill="#a8842a" stroke="#6e5214" stroke-width=".45"/><path d="M699.6 159.4 L716.8 169.5 L729.7 179.8 L714.5 173.5 L697.3 163.4 Z" fill="#b8942e" stroke="#6e5214" stroke-width=".45"/><path d="M696.9 161.0 L713.2 170.6 L725.4 180.4 L710.9 174.5 L694.6 164.9 Z" fill="#a8842a" stroke="#6e5214" stroke-width=".45"/><path d="M694.1 162.5 L709.4 171.2 L720.7 180.4 L707.1 175.2 L691.9 166.5 Z" fill="#b8942e" stroke="#6e5214" stroke-width=".45"/><path d="M691.4 164.0 L704.8 171.6 L714.7 179.9 L702.6 175.6 L689.1 168.0 Z" fill="#a8842a" stroke="#6e5214" stroke-width=".45"/><path d="M688.7 165.6 L700.0 172.1 L708.2 179.4 L697.8 176.1 L686.4 169.6 Z" fill="#b8942e" stroke="#6e5214" stroke-width=".45"/><path d="M686.0 167.2 L695.0 172.6 L701.3 179.0 L692.7 176.5 L683.6 171.1 Z" fill="#a8842a" stroke="#6e5214" stroke-width=".45"/><path d="M683.3 168.7 L690.3 173.2 L694.8 178.7 L687.8 177.0 L680.9 172.6 Z" fill="#b8942e" stroke="#6e5214" stroke-width=".45"/><path d="M680.6 170.3 L686.0 173.7 L689.2 178.5 L683.5 177.6 L678.1 174.2 Z" fill="#a8842a" stroke="#6e5214" stroke-width=".45"/><path d="M708.8 154.3 L735.2 167.5 L756.0 180.0 L733.6 170.9 L707.2 157.7 Z" fill="#d9bc4c" stroke="#6e5214" stroke-width=".45"/><path d="M706.2 155.9 L730.5 169.9 L749.5 183.0 L728.6 173.2 L704.3 159.2 Z" fill="#c4a038" stroke="#6e5214" stroke-width=".45"/><path d="M703.5 157.4 L725.7 169.5 L743.0 181.0 L723.9 172.8 L701.6 160.8 Z" fill="#e2c858" stroke="#6e5214" stroke-width=".45"/><path d="M700.8 159.0 L721.3 171.6 L737.0 183.6 L719.3 174.9 L698.8 162.3 Z" fill="#b8932e" stroke="#6e5214" stroke-width=".45"/><path d="M698.0 160.5 L716.7 170.9 L731.0 181.0 L714.8 174.2 L696.2 163.8 Z" fill="#d9bc4c" stroke="#6e5214" stroke-width=".45"/><path d="M695.4 162.1 L713.9 173.6 L728.0 184.6 L711.9 176.8 L693.4 165.3 Z" fill="#c4a038" stroke="#6e5214" stroke-width=".45"/><path d="M692.5 163.6 L708.7 172.0 L721.0 180.5 L706.9 175.3 L690.8 167.0 Z" fill="#e2c858" stroke="#6e5214" stroke-width=".45"/><path d="M689.9 165.2 L704.3 174.1 L715.0 183.0 L702.3 177.3 L687.9 168.4 Z" fill="#b8932e" stroke="#6e5214" stroke-width=".45"/><path d="M687.0 166.7 L698.5 172.5 L707.0 179.0 L696.8 175.9 L685.3 170.1 Z" fill="#d9bc4c" stroke="#6e5214" stroke-width=".45"/><path d="M684.6 168.4 L693.7 174.8 L700.0 181.6 L691.5 177.9 L682.4 171.5 Z" fill="#c4a038" stroke="#6e5214" stroke-width=".45"/><path d="M681.6 169.8 L688.4 173.4 L693.0 178.0 L686.6 176.7 L679.8 173.1 Z" fill="#e2c858" stroke="#6e5214" stroke-width=".45"/><path d="M679.1 171.5 L684.6 175.7 L688.0 180.6 L682.4 178.7 L676.9 174.5 Z" fill="#b8932e" stroke="#6e5214" stroke-width=".45"/>
<path d="M684 161 L707 155 L725 162 L745 172 L756 180" fill="none" stroke="#e0c454" stroke-width="2.2" stroke-linejoin="round"/>
<path d="M672 181 L690 184 L701 189 L708 200 L694 206 L680 199 Z" fill="#b8942e"/>
<path d="M712.4 195.2 L725.8 214.0 L734.9 230.6 L722.1 216.6 L708.6 197.9 Z" fill="#a8842a" stroke="#6e5214" stroke-width=".45"/><path d="M709.4 194.5 L721.7 213.1 L729.9 229.5 L717.9 215.6 L705.6 197.0 Z" fill="#b8942e" stroke="#6e5214" stroke-width=".45"/><path d="M706.4 193.7 L717.9 211.6 L725.4 227.5 L714.0 214.1 L702.6 196.2 Z" fill="#a8842a" stroke="#6e5214" stroke-width=".45"/><path d="M703.4 192.8 L714.4 210.0 L721.3 225.3 L710.5 212.5 L699.6 195.3 Z" fill="#b8942e" stroke="#6e5214" stroke-width=".45"/><path d="M700.4 192.0 L711.0 208.7 L717.7 223.7 L707.1 211.2 L696.6 194.5 Z" fill="#a8842a" stroke="#6e5214" stroke-width=".45"/><path d="M697.5 191.2 L707.8 208.1 L714.4 223.1 L703.9 210.5 L693.5 193.6 Z" fill="#b8942e" stroke="#6e5214" stroke-width=".45"/><path d="M694.5 190.4 L704.2 206.7 L710.3 221.3 L700.3 209.1 L690.5 192.8 Z" fill="#a8842a" stroke="#6e5214" stroke-width=".45"/><path d="M691.5 189.6 L700.1 204.8 L705.1 218.4 L696.1 207.1 L687.5 191.9 Z" fill="#b8942e" stroke="#6e5214" stroke-width=".45"/><path d="M688.5 188.8 L696.4 203.2 L700.8 216.1 L692.3 205.4 L684.5 191.0 Z" fill="#a8842a" stroke="#6e5214" stroke-width=".45"/><path d="M685.5 187.9 L693.0 200.0 L697.3 211.2 L689.1 202.5 L681.5 190.3 Z" fill="#b8942e" stroke="#6e5214" stroke-width=".45"/><path d="M682.5 187.0 L688.8 197.3 L692.1 206.9 L684.9 199.7 L678.5 189.5 Z" fill="#a8842a" stroke="#6e5214" stroke-width=".45"/><path d="M679.5 186.3 L684.1 194.6 L685.9 202.4 L680.1 196.8 L675.5 188.5 Z" fill="#b8942e" stroke="#6e5214" stroke-width=".45"/><path d="M713.5 195.9 L729.5 218.2 L741.0 237.5 L726.4 220.4 L710.5 198.1 Z" fill="#d9bc4c" stroke="#6e5214" stroke-width=".45"/><path d="M710.5 195.1 L725.1 215.3 L735.5 233.0 L722.0 217.5 L707.5 197.3 Z" fill="#c4a038" stroke="#6e5214" stroke-width=".45"/><path d="M707.6 194.3 L721.0 216.3 L730.4 235.3 L717.8 218.3 L704.4 196.3 Z" fill="#e2c858" stroke="#6e5214" stroke-width=".45"/><path d="M704.6 193.4 L717.2 212.1 L726.0 228.5 L714.1 214.3 L701.4 195.6 Z" fill="#b8932e" stroke="#6e5214" stroke-width=".45"/><path d="M701.6 192.7 L713.8 213.0 L722.1 230.6 L710.5 215.0 L698.4 194.6 Z" fill="#d9bc4c" stroke="#6e5214" stroke-width=".45"/><path d="M698.6 191.8 L710.4 209.5 L718.5 225.0 L707.2 211.6 L695.4 193.9 Z" fill="#c4a038" stroke="#6e5214" stroke-width=".45"/><path d="M695.7 191.1 L707.4 211.7 L715.4 229.6 L704.1 213.6 L692.3 192.9 Z" fill="#e2c858" stroke="#6e5214" stroke-width=".45"/><path d="M692.6 190.1 L703.1 206.6 L710.0 221.0 L699.8 208.6 L689.4 192.2 Z" fill="#b8932e" stroke="#6e5214" stroke-width=".45"/><path d="M689.7 189.5 L698.8 207.7 L704.5 223.4 L695.4 209.4 L686.3 191.2 Z" fill="#d9bc4c" stroke="#6e5214" stroke-width=".45"/><path d="M686.6 188.5 L695.4 203.1 L701.0 216.0 L692.2 205.1 L683.4 190.5 Z" fill="#c4a038" stroke="#6e5214" stroke-width=".45"/><path d="M683.6 187.6 L692.0 200.7 L697.3 212.5 L688.8 202.8 L680.4 189.7 Z" fill="#e2c858" stroke="#6e5214" stroke-width=".45"/><path d="M680.6 186.9 L686.7 197.1 L690.0 206.5 L683.4 199.1 L677.4 188.8 Z" fill="#b8932e" stroke="#6e5214" stroke-width=".45"/><path d="M677.7 186.1 L682.1 194.7 L684.0 202.5 L678.7 196.4 L674.3 187.9 Z" fill="#d9bc4c" stroke="#6e5214" stroke-width=".45"/>
<path d="M672 181 L690 184 L701 189 L712 197 L720 207 L731 222 L741 237.5" fill="none" stroke="#e0c454" stroke-width="2.2" stroke-linejoin="round"/>
<path d="M650 174 L672 174 L678 198 L686 215 L697 246 L638 246 L639 215 L641 186 Z" fill="url(#sprb)"/>
<path d="M660 178 L664 246 M668 180 L680 246 M673 190 L690 246 M642 200 L641 246" stroke="#4a1018" stroke-width="1.2" fill="none"/>
<path d="M645 182 L654 182 L654.5 246 L646 246 Z" fill="#5a8ea4"/>
<path d="M646 188 L654 198 M646 200 L654 210 M646 212 L654 222 M646 222 L654 230" stroke="#3a2c6c" stroke-width="1.4"/>
<rect x="646" y="232" width="9" height="9" fill="#c8a030" stroke="#6e5214" stroke-width=".6"/>
<path d="M654 149 L682 151 L685 163 L673 174 L659 176 L655 165 Z" fill="#6496ac"/>
<path d="M664 152 L674 166 M670 152 L679 161 M662 160 L668 170" stroke="#3a3c84" stroke-width="1.1" fill="none"/>
<path d="M646 147 L656 146 L663 156 L670 174 L650 175 L643 170 L644 156 Z" fill="#842834"/>
<path d="M650 150 L656 174 M655 150 L664 174" stroke="#4a1018" stroke-width="1"/>
<rect x="646" y="145" width="8" height="3.5" fill="#c8a030" transform="rotate(-15 650 147)"/>
<path d="M649 172.5 L672 172 L672 175 L649 176 Z" fill="#a0a03c"/>
<path d="M676 152 L685 156 L686 163 L704 158 L710 160 L708 166 L698 169 L686 174 L679 172 Z" fill="#6496ac"/>
<path d="M688 167 L700 163 M690 170 L698 167" stroke="#4a3c8c" stroke-width="1.1"/>
<rect x="676.5" y="160" width="9" height="4" fill="#c8a030" transform="rotate(10 681 162)"/>
<path d="M694 152 Q694 145.5 701 145.5 Q708 145.5 708 152 L707 156 L704.5 157 L704 160 L698.5 160 L698 157 L695.5 156 Z" fill="#e6d6e4" stroke="#7a6a84" stroke-width=".6"/>
<circle cx="698.6" cy="153.3" r="1.7" fill="#201828"/><circle cx="704" cy="153.3" r="1.7" fill="#201828"/><path d="M701.3 155 L700.6 157 L702 157 Z" fill="#201828"/>
<path d="M640 168 L655 166 L657 176 L642 178 Z" fill="#6496ac"/>
<path d="M627 168 Q627 165.5 630 165.5 L638 166.5 L641 170 L640 177 L632 178 L627 174 Z" fill="#6496ac" stroke="#2c5068" stroke-width=".6"/>
<path d="M623 118 L626.2 118 L636 246 L632.5 246 Z" fill="#c4a032"/>
<path d="M624.2 118 L634 246" stroke="#f0dc78" stroke-width=".8"/>
<path d="M632.2 222 L635.6 224 M632.5 227 L636 229 M632.8 232 L636.3 234 M633.1 237 L636.6 239 M633.4 242 L636.9 244" stroke="#6e5214" stroke-width="1"/>
<path d="M623 125.5 L613 128.5 L602 135.5 L594 145 L590 155 L593 150 L599 142 L607.5 136 L616.5 133.5 L624 132 Z" fill="#d2b040" stroke="#6e5214" stroke-width=".6"/>
<path d="M627 126.5 L639 125.5 L641.5 134.5 L636 130 L628 131 Z" fill="#d2b040" stroke="#6e5214" stroke-width=".6"/>
<path d="M622.5 119 L627 119 L628 128 L623 128 Z" fill="#a88424"/>
<path d="M621.5 128 L630.5 140 M630.5 128 L622.5 140 M622.5 140 L631.5 152 M631.5 140 L623.5 152" stroke="#1e5c40" stroke-width="1.6" fill="none"/>
<path d="M625 143 Q618 142 614 147 Q619 145 625 146 Z M632 143 Q638 142 641 146 Q637 145 632 146 Z M626 151 Q620 150 617 154 Q621 153 626 154 Z M633 151 Q638 150 640 153 Q637 153 633 154 Z" fill="#d8cce0" stroke="#6a6080" stroke-width=".4"/>
<path d="M657 135 Q647 132 642.5 123 Q652 126 660 130 Z" fill="#8e5cae" stroke="#4a2c70" stroke-width=".5"/>
<path d="M671 136 Q680 131 681 121 Q674 126 668 130 Z" fill="#8e5cae" stroke="#4a2c70" stroke-width=".5"/>
<path d="M657 132 Q658 124.5 665 124.5 Q672 124.5 672.5 132 L674 146 L670 152 L668 142 L660 142 L657 152 L654 148 Z" fill="#46368c"/>
<path d="M659.5 133 Q660 128.5 665 129 Q670 129 670 134 L669 140 L665.5 144 L661 141 Z" fill="#6496ac"/>
<rect x="661.3" y="134" width="2" height="1.3" fill="#e02030"/><rect x="666.6" y="134" width="2" height="1.3" fill="#e02030"/>
</svg>
<div class="field" style="left:762px;top:118px;width:13px;height:13px;"><div class="fin" style="background:#fff"></div></div>
<div class="t" style="left:782.50px;top:117px;letter-spacing:0.163px;">Transparent</div>
<div class="field" style="left:762px;top:138px;width:13px;height:13px;"><div class="fin" style="background:#fff"></div></div>
<div class="t" style="left:780.50px;top:137px;letter-spacing:-0.227px;">Flying</div>
<div class="btn" style="left:762px;top:222px;width:57px;height:26px;"></div>
<div class="t" style="left:762px;top:228px;width:56px;text-align:center;"><u>S</u>et</div>
<div style="left:546px;top:271px;width:460px;height:278px;box-sizing:border-box;border-top:1px solid #ffffff;border-left:1px solid #ffffff;border-bottom:1px solid #ffffff;border-right:1px solid #ffffff;"></div>
<div style="left:545px;top:270px;width:460px;height:278px;box-sizing:border-box;border-top:1px solid #a0a0a0;border-left:1px solid #a0a0a0;border-bottom:1px solid #a0a0a0;border-right:1px solid #a0a0a0;"></div>
<div style="left:552.1px;top:270px;width:107.39999999999998px;height:2px;background:#f0f0f0"></div>
<div class="t" style="left:554.10px;top:264px;letter-spacing:0.286px;">Attack Patterns</div>
<div class="field" style="left:553px;top:281px;width:430px;height:255px;"><div class="fin" style="background:#fff"></div></div>
<div class="hdr" style="left:555px;top:283px;width:163px;height:17px"></div>
<div class="t" style="left:559.90px;top:285px;letter-spacing:-0.328px;">Behaviour</div>
<div class="hdr" style="left:718px;top:283px;width:172px;height:17px"></div>
<div class="t" style="left:725.40px;top:285px;letter-spacing:-0.350px;">Condition</div>
<div class="hdr" style="left:890px;top:283px;width:53px;height:17px"></div>
<div class="t" style="left:896.40px;top:285px;letter-spacing:-0.212px;">Rating</div>
<div style="left:943px;top:283px;width:38px;height:17px;background:#f0f0f0;border-bottom:1px solid #a0a0a0;box-sizing:border-box"></div>
<div class="t" style="left:558.50px;top:303px;letter-spacing:-0.478px;">Normal Attack</div>
<div class="t" style="left:725.40px;top:303px;letter-spacing:-0.599px;">Always</div>
<div class="t" style="left:896.50px;top:303px;letter-spacing:-0.271px;">55</div>
<div class="t" style="left:558.50px;top:318px;letter-spacing:-0.381px;">Double Attack</div>
<div class="t" style="left:725.40px;top:318px;letter-spacing:-0.599px;">Always</div>
<div class="t" style="left:896.50px;top:318px;letter-spacing:-0.271px;">55</div>
<div class="t" style="left:558.50px;top:333px;letter-spacing:-0.364px;">Flame <span class="I">I</span><span class="I">I</span><span class="I">I</span></div>
<div class="t" style="left:725.40px;top:333px;letter-spacing:-0.599px;">Always</div>
<div class="t" style="left:896.50px;top:333px;letter-spacing:-0.271px;">50</div>
<div class="t" style="left:558.50px;top:348px;letter-spacing:-0.257px;">Blizzard <span class="I">I</span><span class="I">I</span><span class="I">I</span></div>
<div class="t" style="left:725.40px;top:348px;letter-spacing:-0.599px;">Always</div>
<div class="t" style="left:896.50px;top:348px;letter-spacing:-0.271px;">50</div>
<div class="t" style="left:559.50px;top:363px;letter-spacing:-0.355px;">Spark <span class="I">I</span><span class="I">I</span><span class="I">I</span></div>
<div class="t" style="left:725.40px;top:363px;letter-spacing:-0.599px;">Always</div>
<div class="t" style="left:896.50px;top:363px;letter-spacing:-0.271px;">50</div>
<div class="t" style="left:559.50px;top:378px;letter-spacing:-0.168px;">Wave <span class="I">I</span><span class="I">I</span><span class="I">I</span></div>
<div class="t" style="left:725.40px;top:378px;letter-spacing:-0.599px;">Always</div>
<div class="t" style="left:896.50px;top:378px;letter-spacing:-0.271px;">50</div>
<div class="t" style="left:559.50px;top:393px;letter-spacing:-0.200px;">Quake <span class="I">I</span><span class="I">I</span><span class="I">I</span></div>
<div class="t" style="left:725.40px;top:393px;letter-spacing:-0.599px;">Always</div>
<div class="t" style="left:896.50px;top:393px;letter-spacing:-0.271px;">50</div>
<div class="t" style="left:560.50px;top:408px;letter-spacing:-0.171px;">Tornado <span class="I">I</span><span class="I">I</span><span class="I">I</span></div>
<div class="t" style="left:725.40px;top:408px;letter-spacing:-0.599px;">Always</div>
<div class="t" style="left:896.50px;top:408px;letter-spacing:-0.271px;">50</div>
<div class="t" style="left:558.50px;top:423px;letter-spacing:-0.212px;">Darkness <span class="I">I</span><span class="I">I</span><span class="I">I</span></div>
<div class="t" style="left:725.40px;top:423px;letter-spacing:-0.599px;">Always</div>
<div class="t" style="left:896.50px;top:423px;letter-spacing:-0.271px;">50</div>
</div></div>
<svg style="left:21px;top:598px" width="16" height="16"><path d="M4.5 12 L4.5 2.5 L13.5 1.5 L13.5 10.5" fill="none" stroke="#000" stroke-width="1.3"/><path d="M4.5 4.7 L13.5 3.7" stroke="#000" stroke-width="1.6"/><rect x="0.7" y="10.2" width="4.3" height="3.6" rx="1.2" fill="#f8d020" stroke="#705000" stroke-width="0.8"/><rect x="9.7" y="8.9" width="4.3" height="3.6" rx="1.2" fill="#f05030" stroke="#702000" stroke-width="0.8"/></svg>
<div class="btn" style="left:614px;top:594px;width:87px;height:25px;"></div>
<div class="t" style="left:614px;top:599px;width:86px;text-align:center;"><u>O</u>K</div>
<div class="btn" style="left:710px;top:594px;width:87px;height:25px;"></div>
<div class="t" style="left:710px;top:599px;width:86px;text-align:center;">Cancel</div>
<div class="btn" style="left:806px;top:594px;width:87px;height:25px;"></div>
<div class="t" style="left:806px;top:599px;width:86px;text-align:center;"><u>A</u>pply</div>
<div class="btn" style="left:902px;top:594px;width:87px;height:25px;"></div>
<div class="t" style="left:902px;top:599px;width:86px;text-align:center;"><u>H</u>elp</div>
</body></html>
